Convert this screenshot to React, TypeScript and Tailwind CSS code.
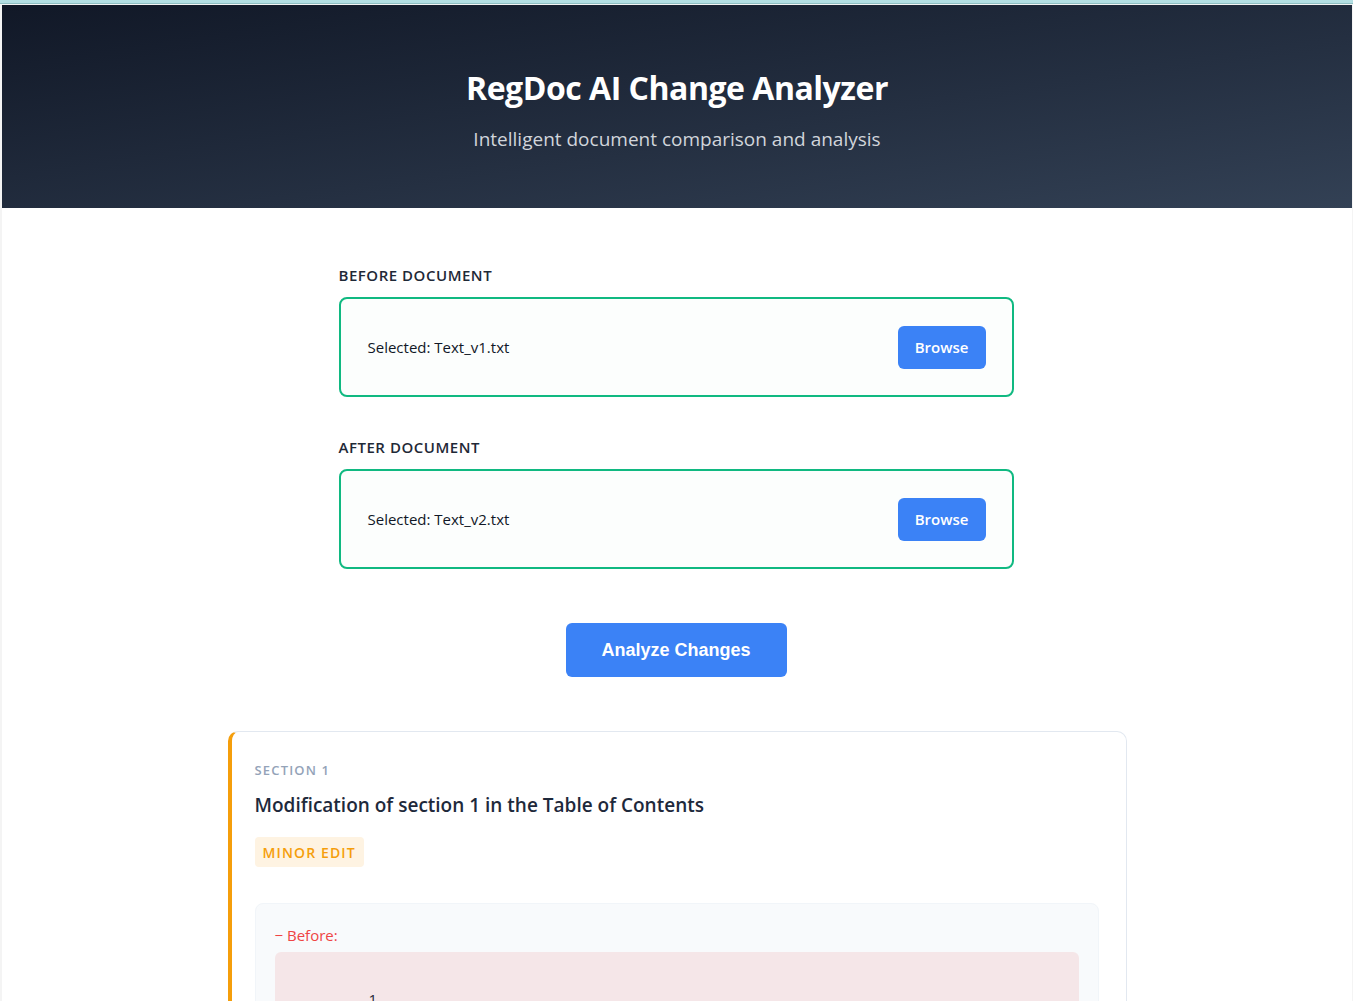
const sans = "font-['Open_Sans','Noto_Sans',sans-serif]";

function FileField({ label, file }: { label: string; file: string }) {
  return (
    <div>
      <p className="mb-3 text-[15px] leading-5 font-semibold tracking-[0.035em] text-[#1f2937]">
        {label}
      </p>
      <div className="flex h-[100px] items-center justify-between rounded-lg border-2 border-[#10b981] bg-[#fcfefd] pl-[27px] pr-[26px]">
        <span className="text-[15px] text-[#111827]">Selected: {file}</span>
        <span className="flex h-[43px] w-[88px] items-center justify-center rounded-md bg-[#3b82f6] text-[15px] font-semibold text-white">
          Browse
        </span>
      </div>
    </div>
  );
}

export default function App() {
  return (
    <div className={`${sans} min-h-screen bg-[#f4f4f4]`}>
      <div className="h-[3px] bg-[#b3dfe3]" />
      <div className="h-px bg-[#8fbfc3]" />
      <div className="ml-[2px] mr-px mt-px min-h-[996px] bg-white">
        <header className="flex h-[203px] flex-col items-center bg-gradient-to-br from-[#111827] to-[#334155] pt-[63px]">
          <h1 className="text-[32px] leading-10 font-bold tracking-[-0.015em] text-white">
            RegDoc AI Change Analyzer
          </h1>
          <p className="mt-[19px] text-[19px] leading-6 text-[#d1d5db]">
            Intelligent document comparison and analysis
          </p>
        </header>

        <main className="flex flex-col items-center pt-[57px]">
          <div className="-ml-[2px] flex w-[675px] flex-col gap-10">
            <FileField label="BEFORE DOCUMENT" file="Text_v1.txt" />
            <FileField label="AFTER DOCUMENT" file="Text_v2.txt" />
          </div>

          <button className="mt-[54px] h-[54px] w-[221px] -translate-x-px rounded-md bg-[#3b82f6] font-['Liberation_Sans',Arial,sans-serif] text-[18px] font-bold text-white">
            Analyze Changes
          </button>

          <section className="mt-[54px] w-[899px] rounded-[10px] border border-l-4 border-[#e2e8f0] border-l-[#f59e0b] pb-10 pl-[23px] pr-[27px] pt-[28px]">
            <p className="text-[13px] leading-5 font-semibold tracking-[0.09em] text-[#94a3b8]">
              SECTION 1
            </p>
            <h2 className="mt-[11px] text-[19px] leading-7 font-semibold text-[#1e293b]">
              Modification of section 1 in the Table of Contents
            </h2>
            <span className="mt-[18px] inline-flex h-[30px] items-center rounded bg-[#fef3e2] px-2 text-[14px] font-semibold tracking-[0.08em] text-[#f59e0b]">
              MINOR EDIT
            </span>

            <div className="mt-9 rounded-lg border border-[#f1f5f9] bg-[#f8fafc] px-[19px] pb-5 pt-5">
              <p className="text-[15px] leading-[22px] text-[#ef4444]">− Before:</p>
              <div className="mt-[6px] h-[120px] rounded-md bg-[#f5e6e8] pl-[94px] pt-9 text-[15px] text-[#1f2937]">
                1
              </div>
            </div>
          </section>
        </main>
      </div>
    </div>
  );
}
